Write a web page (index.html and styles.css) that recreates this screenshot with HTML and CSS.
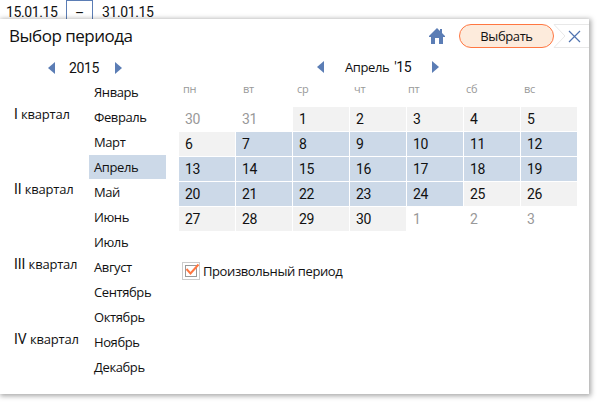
FILE: index.html
```
<!DOCTYPE html>
<html lang="ru">
<head>
<meta charset="utf-8">
<title>Выбор периода</title>
<link rel="stylesheet" href="styles.css">
</head>
<body>
<div class="range"><span class="from">15.01.15</span><span class="dash">–</span><span>31.01.15</span></div>
<main class="panel">
  <header class="head">
    <h1 class="title">Выбор периода</h1>
    <svg class="home" width="16" height="16" viewBox="0 0 16 16"><path d="M8 0 L11 3 V1 H13 V5 L16 8 V9 H14 V16 H10 V10 H6 V16 H2 V9 H0 V8 Z"/></svg>
    <button class="choose">Выбрать</button>
    <svg class="close" width="36" height="24" viewBox="0 0 36 24"><path class="edge" d="M36 .5 H1 L12 12 L1 23.5 H36"/><path class="cross" d="M16 7 L27 18 M27 7 L16 18"/></svg>
  </header>
  <div class="body">
    <section class="year">
      <div class="year-nav"><i class="arrow prev"></i><span class="num">2015</span><i class="arrow next"></i></div>
      <div class="lists">
        <div class="quarters"><span class="quarter"><span class="roman">I</span> квартал</span><span class="quarter"><span class="roman">II</span> квартал</span><span class="quarter"><span class="roman">III</span> квартал</span><span class="quarter"><span class="roman">IV</span> квартал</span></div>
        <div class="months"><span>Январь</span><span>Февраль</span><span>Март</span><span class="current">Апрель</span><span>Май</span><span>Июнь</span><span>Июль</span><span>Август</span><span>Сентябрь</span><span>Октябрь</span><span>Ноябрь</span><span>Декабрь</span></div>
      </div>
    </section>
    <section class="calendar">
      <div class="month-nav"><i class="arrow prev"></i><span class="month-name">Апрель <span class="num">'15</span></span><i class="arrow next"></i></div>
      <div class="weekdays"><span>пн</span><span>вт</span><span>ср</span><span>чт</span><span>пт</span><span>сб</span><span>вс</span></div>
      <div class="days">
        <span class="out">30</span><span class="out">31</span><span>1</span><span>2</span><span>3</span><span>4</span><span>5</span>
        <span>6</span><span class="sel">7</span><span class="sel">8</span><span class="sel">9</span><span class="sel">10</span><span class="sel">11</span><span class="sel">12</span>
        <span class="sel">13</span><span class="sel">14</span><span class="sel">15</span><span class="sel">16</span><span class="sel">17</span><span class="sel">18</span><span class="sel">19</span>
        <span class="sel">20</span><span class="sel">21</span><span class="sel">22</span><span class="sel">23</span><span class="sel">24</span><span>25</span><span>26</span>
        <span>27</span><span>28</span><span>29</span><span>30</span><span class="out">1</span><span class="out">2</span><span class="out">3</span>
      </div>
      <div class="custom">
        <svg class="check" width="18" height="18" viewBox="0 0 18 18"><rect class="focus" x=".5" y=".5" width="17" height="17"/><rect class="box" x="3.5" y="3.5" width="11" height="11"/><path class="tick" d="M4.5 7 L8.5 11.5 L16.5 2.5"/></svg>
        <span class="label">Произвольный период</span>
      </div>
    </section>
  </div>
</main>
</body>
</html>
```
FILE: styles.css
```
* { box-sizing: border-box; }
body {
  margin: 0;
  height: 410px;
  overflow: hidden;
  background: #fff;
  color: #111;
  font: 13px/24px "Open Sans", "Noto Sans", sans-serif;
  letter-spacing: -.4px;
}
.range {
  display: flex;
  height: 19px;
  padding-left: 6px;
  font: 14px/24px Roboto, sans-serif;
}
.from { width: 60px; }
.dash {
  width: 27px;
  height: 25px;
  margin-right: 9px;
  border: 1px solid #5b7db5;
  text-align: center;
}
.num { font: 14px/24px Roboto, sans-serif; }
.panel {
  position: relative;
  width: 589px;
  height: 375px;
  background: #fff;
  box-shadow: 1px 1px 5px 1px rgba(0, 0, 0, .35);
}
.head { display: flex; height: 37px; padding-top: 5px; }
.title {
  width: 429px;
  margin: 0;
  padding-left: 9px;
  font-size: 17px;
  font-weight: 400;
  line-height: 24px;
  letter-spacing: -.5px;
}
.home { margin: 4px 14px 0 0; fill: #5b7db5; }
.choose {
  width: 95px;
  height: 24px;
  margin-right: -1px;
  padding: 0;
  border: 1px solid #ff7742;
  border-radius: 12px;
  background: #fdebdc;
  color: #111;
  font: inherit;
  line-height: 22px;
  letter-spacing: -.4px;
}
.close { fill: none; }
.edge { stroke: #e8e8e8; }
.cross { stroke: #4f73b0; stroke-width: 1.2; }
.body { display: flex; }
.year { width: 179px; }
.year-nav { display: flex; align-items: center; height: 24px; padding-left: 48px; }
.year-nav .num { width: 31px; margin: 0 15px 0 14px; }
.arrow { width: 7px; height: 12px; background: #5b7db5; }
.prev { clip-path: polygon(100% 0, 100% 100%, 0 50%); }
.next { clip-path: polygon(0 0, 100% 50%, 0 100%); }
.lists { display: flex; }
.quarters { width: 89px; padding: 22px 0 0 14px; letter-spacing: -.2px; }
.quarter { display: block; height: 75px; white-space: nowrap; }
.roman { font: 14px/20px Roboto, sans-serif; letter-spacing: 0; }
.months { width: 77px; }
.months span { display: block; height: 24px; margin-bottom: 1px; padding-left: 5px; }
.months .current { background: #ccd9e8; }
.calendar { width: 398px; }
.month-nav { display: flex; align-items: center; height: 22px; padding-left: 138px; }
.month-name { width: 66px; margin: 0 21px 0 21px; white-space: nowrap; word-spacing: 2px; }
.weekdays {
  display: grid;
  grid-template-columns: 60px 54px 57px 54px 58px 58px 50px;
  height: 29px;
  padding-left: 4px;
  color: #999;
  font-size: 11px;
  line-height: 22px;
  letter-spacing: -.2px;
}
.days {
  display: grid;
  grid-template-columns: repeat(7, 56px);
  grid-auto-rows: 24px;
  gap: 1px;
  font: 14px/24px Roboto, sans-serif;
}
.days span { padding-left: 6px; background: #f2f2f2; }
.days .sel { background: #ccd9e8; }
.days .out { background: none; color: #999; }
.custom { display: flex; align-items: center; height: 24px; margin-top: 28px; padding-left: 3px; }
.check { margin-right: 3px; fill: none; }
.focus { stroke: #999; stroke-dasharray: 1 1; }
.box { stroke: #999; }
.tick { stroke: #ff7742; stroke-width: 2; }
```
